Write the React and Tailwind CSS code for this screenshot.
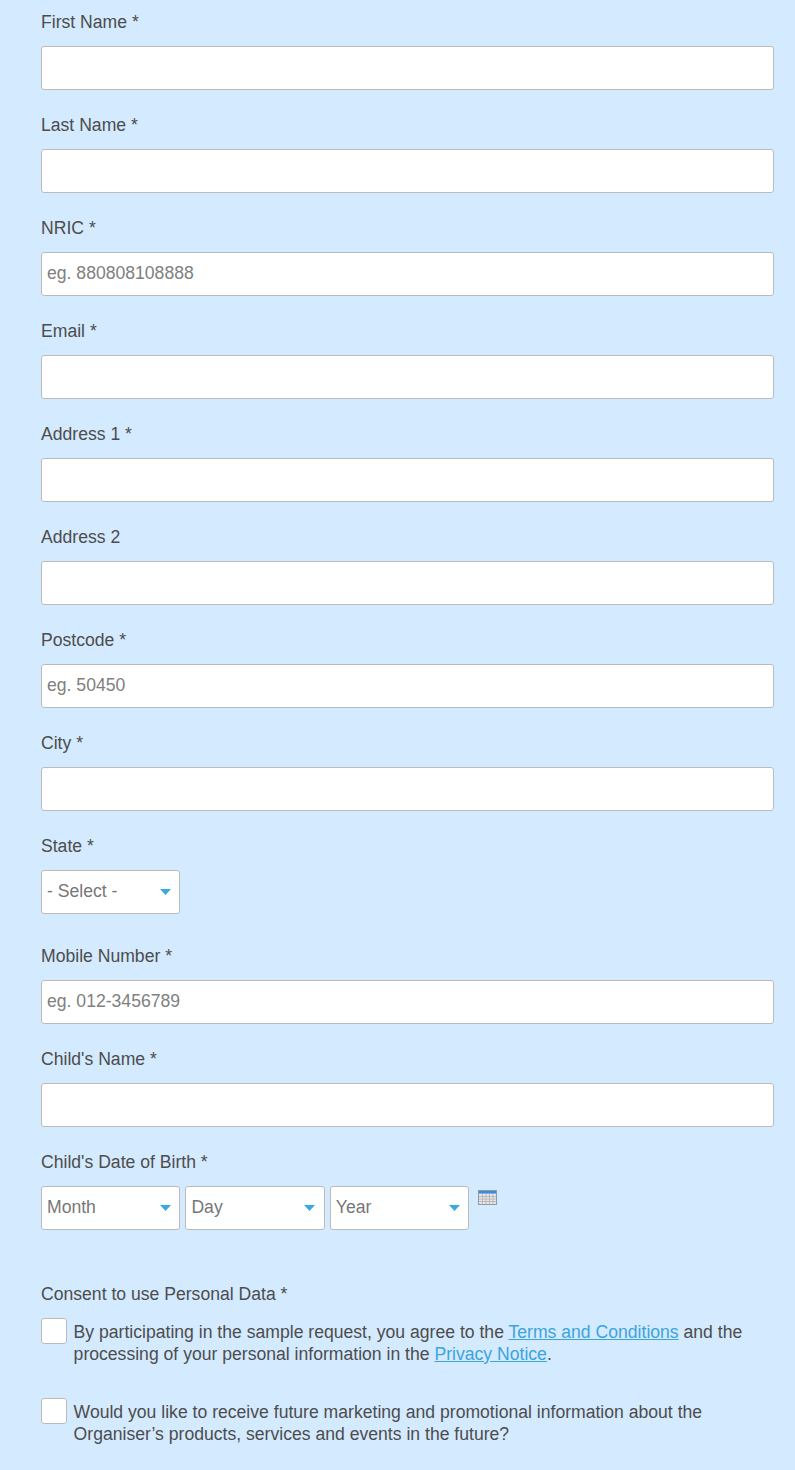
const F = ["First Name *", "Last Name *", ["NRIC *", "eg. 880808108888"], "Email *", "Address 1 *", "Address 2", ["Postcode *", "eg. 50450"], "City *"];

function Label({ children }) {
  return <label className="block h-6 mb-3 text-[17.6px] leading-6 text-[#4d4d4d]">{children}</label>;
}

function Field({ label, placeholder }) {
  return (
    <div className="mb-[23px]">
      <Label>{label}</Label>
      <input
        placeholder={placeholder}
        className="block w-full h-11 px-[5px] pb-[2px] bg-white border border-[#bbbbbb] rounded-[3px] text-[17.6px] text-[#4d4d4d] placeholder:text-[#808080] outline-none"
      />
    </div>
  );
}

function Select({ children }) {
  return (
    <div className="relative w-[139.4px] h-11 shrink-0">
      <select className="block w-full h-full pl-[5px] pr-6 pb-[2px] appearance-none bg-white border border-[#bbbbbb] rounded-[3px] text-[17.6px] text-[#777777] outline-none">
        <option>{children}</option>
      </select>
      <svg className="absolute right-[9.5px] top-[19px]" width="11" height="6" viewBox="0 0 11 6">
        <path d="M0 0H11L5.5 6Z" fill="#3ba9e0" />
      </svg>
    </div>
  );
}

function Calendar() {
  return (
    <svg className="ml-[3.6px] mt-[4px]" width="19" height="15" viewBox="0 0 19 15">
      <rect x="0" y="0" width="19" height="15" fill="#8f9aa5" />
      <rect x="1" y="1" width="17" height="2" fill="#3f8bd8" />
      <rect x="1" y="3" width="17" height="1" fill="#74b2ec" />
      <rect x="1" y="4" width="17" height="10" fill="#e8e8e8" />
      <path d="M4.5 4V14M8 4V14M11.5 4V14M15 4V14M1 6.5H18M1 9H18M1 11.5H18" stroke="#b8b8b8" strokeWidth="1" />
    </svg>
  );
}

function Check({ children, className }) {
  return (
    <div className={"flex " + className}>
      <input type="checkbox" className="appearance-none block shrink-0 w-[26px] h-[26px] bg-white border border-[#bbbbbb] rounded-[3px]" />
      <p className="ml-[6.6px] pt-[3px] text-[17.6px] leading-[22px] text-[#4d4d4d]">{children}</p>
    </div>
  );
}

export default function App() {
  return (
    <div className="min-h-[1470px] bg-[#d4eaff] pt-[10px] pl-[41px] pr-[21px] font-['Liberation_Sans',Arial,sans-serif]">
      {F.map((f) =>
        Array.isArray(f) ? <Field key={f[0]} label={f[0]} placeholder={f[1]} /> : <Field key={f} label={f} />
      )}
      <div className="mb-[30px]">
        <Label>State *</Label>
        <Select>- Select -</Select>
      </div>
      <Field label="Mobile Number *" placeholder="eg. 012-3456789" />
      <Field label="Child's Name *" />
      <div className="mb-[52px]">
        <Label>Child's Date of Birth *</Label>
        <div className="flex gap-[5px] items-start">
          <Select>Month</Select>
          <Select>Day</Select>
          <Select>Year</Select>
          <Calendar />
        </div>
      </div>
      <Label>Consent to use Personal Data *</Label>
      <Check className="mb-[33px]">
        By participating in the sample request, you agree to the{" "}
        <a className="text-[#3ba4dc] underline">Terms and Conditions</a> and the processing of your personal information in the{" "}
        <a className="text-[#3ba4dc] underline">Privacy Notice</a>.
      </Check>
      <Check>
        Would you like to receive future marketing and promotional information about the Organiser’s products, services and events in the future?
      </Check>
    </div>
  );
}
